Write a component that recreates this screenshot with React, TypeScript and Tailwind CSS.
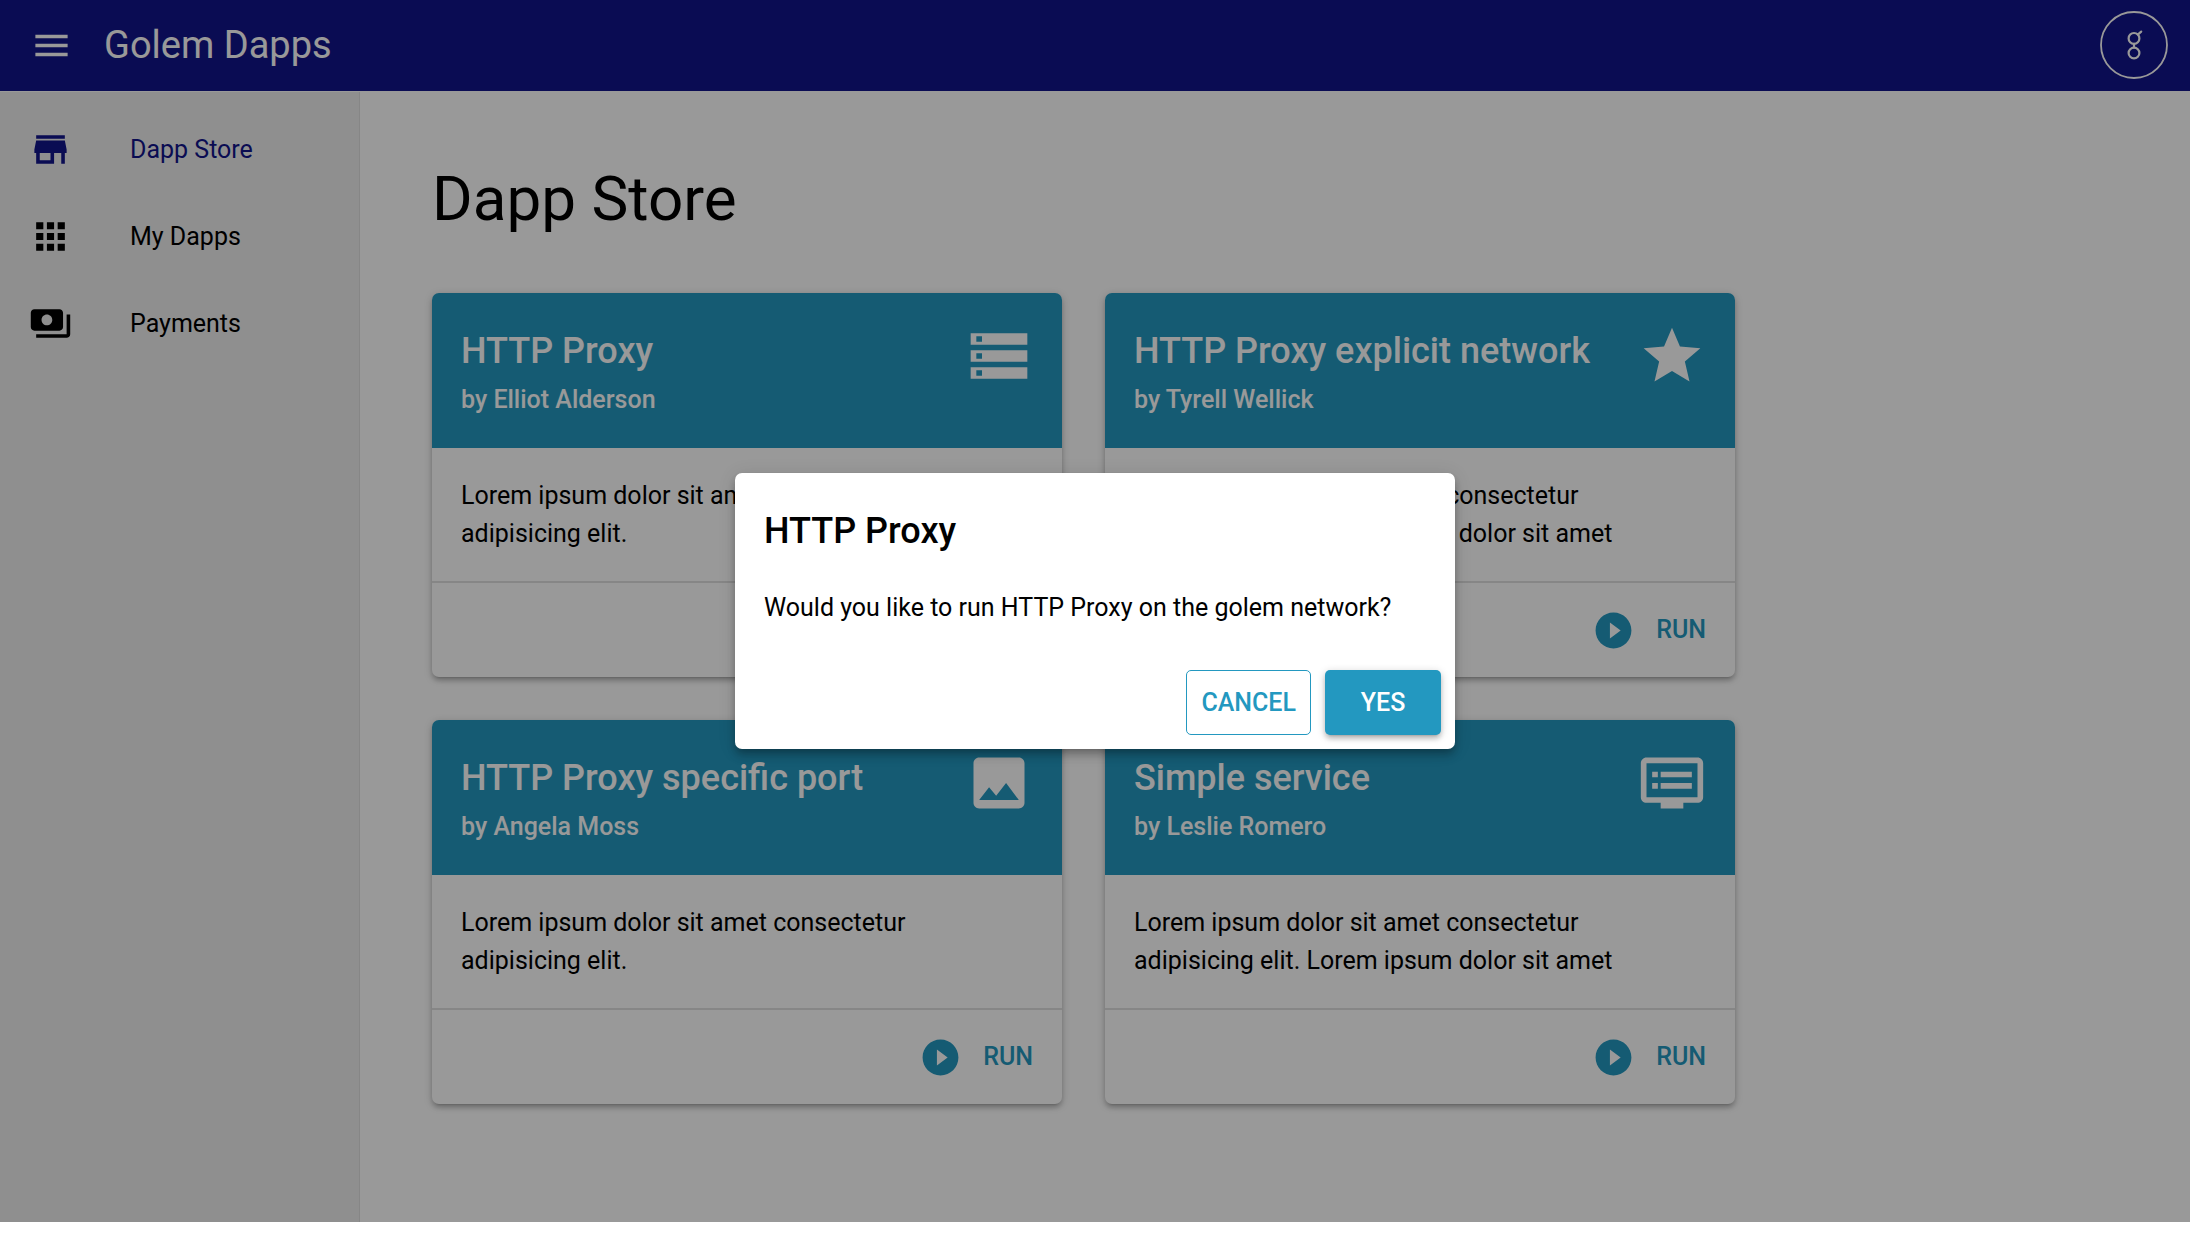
import { useState } from 'react';
import type { IconType } from 'react-icons';
import {
  MdApps,
  MdDvr,
  MdImage,
  MdMenu,
  MdPayments,
  MdPlayCircleFilled,
  MdStar,
  MdStorage,
  MdStore,
} from 'react-icons/md';

type Dapp = { name: string; author: string; description: string; icon: IconType };

const dapps: Dapp[] = [
  {
    name: 'HTTP Proxy',
    author: 'Elliot Alderson',
    description: 'Lorem ipsum dolor sit amet consectetur adipisicing elit.',
    icon: MdStorage,
  },
  {
    name: 'HTTP Proxy explicit network',
    author: 'Tyrell Wellick',
    description: 'Lorem ipsum dolor sit amet consectetur adipisicing elit. Lorem ipsum dolor sit amet',
    icon: MdStar,
  },
  {
    name: 'HTTP Proxy specific port',
    author: 'Angela Moss',
    description: 'Lorem ipsum dolor sit amet consectetur adipisicing elit.',
    icon: MdImage,
  },
  {
    name: 'Simple service',
    author: 'Leslie Romero',
    description: 'Lorem ipsum dolor sit amet consectetur adipisicing elit. Lorem ipsum dolor sit amet',
    icon: MdDvr,
  },
];

const navItems: { label: string; icon: IconType; active: boolean }[] = [
  { label: 'Dapp Store', icon: MdStore, active: true },
  { label: 'My Dapps', icon: MdApps, active: false },
  { label: 'Payments', icon: MdPayments, active: false },
];

function GolemLogo() {
  return (
    <svg viewBox="0 0 68 68" className="size-[68px]" fill="none" stroke="currentColor" aria-hidden="true">
      <circle cx="34" cy="34" r="33" strokeWidth="1.8" />
      <circle cx="34" cy="27.4" r="5.4" strokeWidth="2.2" />
      <circle cx="34" cy="42" r="5.4" strokeWidth="2.2" />
      <path d="M34 32.8v3.8M37.8 23.6l3.4-3" strokeWidth="2.2" strokeLinecap="round" />
    </svg>
  );
}

function Header() {
  return (
    <header className="flex h-[91px] items-center bg-[#12148a] pr-[22px] pb-px pl-[30px] text-white">
      <button type="button" aria-label="Menu">
        <MdMenu className="size-[43px]" />
      </button>
      <div className="ml-[31px] flex-1 text-[38px] leading-[58px]">Golem Dapps</div>
      <button type="button" aria-label="Golem account" className="rounded-full">
        <GolemLogo />
      </button>
    </header>
  );
}

function Sidebar() {
  return (
    <aside className="mt-px w-[360px] shrink-0 border-r border-[#e0e0e0] bg-[#eee] pt-[14px]">
      <nav>
        {navItems.map(({ label, icon: Icon, active }) => (
          <a
            key={label}
            href="#"
            aria-current={active ? 'page' : undefined}
            className={`flex h-[87px] items-center gap-[58px] px-[29px] ${active ? 'text-[#12148a]' : 'text-black'}`}
          >
            <Icon className="size-[43px]" />
            {label}
          </a>
        ))}
      </nav>
    </aside>
  );
}

function DappCard({ dapp, onRun }: { dapp: Dapp; onRun: () => void }) {
  const Icon = dapp.icon;
  return (
    <article className="overflow-hidden rounded-[7px] bg-white shadow-[0_2px_9px_rgba(0,0,0,0.2),0_4px_4px_rgba(0,0,0,0.14),0_5px_2px_-4px_rgba(0,0,0,0.12)]">
      <div className="flex items-start justify-between bg-[#2398c0] p-[29px] font-medium text-white">
        <div>
          <h2 className="text-[36px] leading-[58px]">{dapp.name}</h2>
          <p className="leading-[39px]">by {dapp.author}</p>
        </div>
        <Icon className="size-[68px] shrink-0" />
      </div>
      <p className="pt-[29px] pr-[58px] pb-[28px] pl-[29px]">{dapp.description}</p>
      <div className="flex h-24 items-center justify-end border-t-2 border-black/12 px-[29px]">
        <button type="button" onClick={onRun} className="flex items-center gap-[21px] font-medium text-[#2398c0]">
          <MdPlayCircleFilled className="size-[43px]" />
          RUN
        </button>
      </div>
    </article>
  );
}

function RunDialog({ name, onClose }: { name: string; onClose: () => void }) {
  return (
    <div className="absolute inset-0 flex items-center justify-center bg-black/40">
      <div
        role="dialog"
        aria-modal="true"
        aria-labelledby="run-title"
        className="w-[720px] rounded-[7px] bg-white shadow-[0_4px_7px_-2px_rgba(0,0,0,0.2),0_7px_9px_rgba(0,0,0,0.14),0_2px_18px_rgba(0,0,0,0.12)]"
      >
        <h2 id="run-title" className="p-[29px] text-[36px] leading-[58px] font-medium">
          {name}
        </h2>
        <p className="px-[29px] pb-[29px]">Would you like to run {name} on the golem network?</p>
        <div className="flex justify-end gap-[14px] p-[14px] font-medium">
          <button
            type="button"
            onClick={onClose}
            className="h-[65px] rounded-[5px] border border-[#2398c0] px-[14px] text-[#2398c0]"
          >
            CANCEL
          </button>
          <button
            type="button"
            onClick={onClose}
            className="h-[65px] w-[116px] rounded-[5px] bg-[#2398c0] text-white shadow-[0_2px_9px_rgba(0,0,0,0.2),0_4px_4px_rgba(0,0,0,0.14),0_5px_2px_-4px_rgba(0,0,0,0.12)]"
          >
            YES
          </button>
        </div>
      </div>
    </div>
  );
}

export default function App() {
  const [selected, setSelected] = useState<string | null>('HTTP Proxy');

  return (
    <div className="flex min-h-screen bg-white pr-[22px] pb-3 font-[Roboto,sans-serif] text-[25px] leading-[38px] text-black">
      <div className="relative flex flex-1 flex-col">
        <Header />
        <div className="flex flex-1">
          <Sidebar />
          <main className="flex-1 p-[72px]">
            <h1 className="mb-[58px] text-[62px] leading-[72px]">Dapp Store</h1>
            <div className="grid grid-cols-[repeat(auto-fill,630px)] gap-[43px]">
              {dapps.map((dapp) => (
                <DappCard key={dapp.name} dapp={dapp} onRun={() => setSelected(dapp.name)} />
              ))}
            </div>
          </main>
        </div>
        {selected !== null && <RunDialog name={selected} onClose={() => setSelected(null)} />}
      </div>
    </div>
  );
}
